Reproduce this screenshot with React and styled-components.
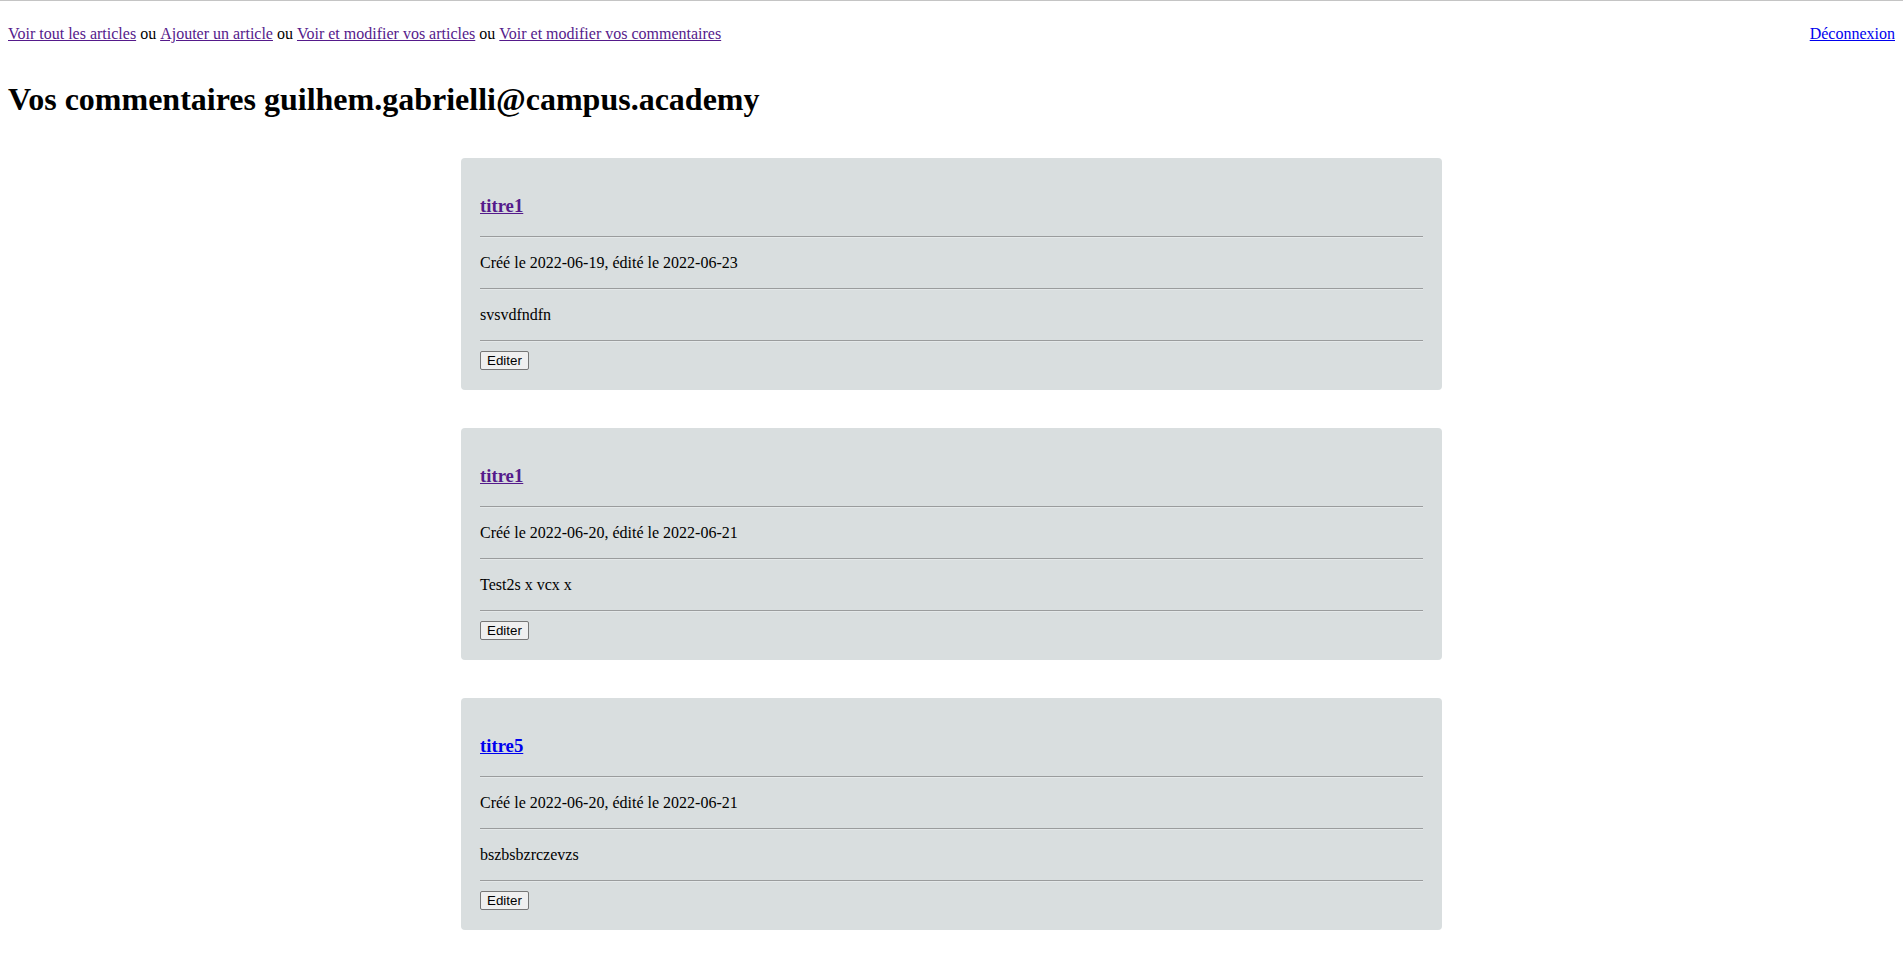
import React from 'react'
import styled, { createGlobalStyle } from 'styled-components'

const GlobalStyle = createGlobalStyle`
    html {
        overflow: hidden;
    }
    body {
        margin: 0;
        border-top: 1px solid #c4c4c4;
        background: #fff;
        font-family: "Liberation Serif", "Times New Roman", serif;
        font-size: 16px;
        color: #000;
    }
`

const TopBar = styled.div`
    display: flex;
    justify-content: space-between;
    align-items: baseline;
    padding: 0 8px;
    margin-top: 24px;
    line-height: 18px;
`

const Links = styled.div`
    display: flex;
    gap: 4px;
    white-space: pre;
`

const NavLink = styled.a`
    color: ${props => (props.visited ? '#551a8b' : '#0000ee')};
    text-decoration: underline;
    cursor: pointer;
`

const Title = styled.h1`
    font-size: 32px;
    font-weight: bold;
    margin: 39px 8px 41px;
    line-height: 35px;
`

const List = styled.div`
    display: flex;
    flex-direction: column;
    align-items: center;
    gap: 37.5px;
`

const Card = styled.div`
    box-sizing: border-box;
    width: 981px;
    background: #d9dedf;
    border-radius: 4px;
    padding: 21px 19px 20px 19px;
`

const CardTitle = styled.h3`
    font-size: 18.72px;
    font-weight: bold;
    margin: 16px 0 20.3px;
    line-height: 21px;
`

const Rule = styled.hr`
    border: none;
    border-top: 1px solid #9a9c9d;
    border-bottom: 1px solid #e4e8e9;
    margin: 0;
`

const Text = styled.p`
    margin: 16px 0;
    line-height: 18px;
`

const Actions = styled.div`
    padding-top: 7px;
    line-height: 21px;
`

const EditButton = styled.button`
    font-family: "Liberation Sans", Arial, sans-serif;
    font-size: 13.33px;
    padding: 1px 6px;
    background: #efefef;
    border: 1px solid #767676;
    border-radius: 2px;
    color: #000;
`

const comments = [
    { id: 1, title: 'titre1', visited: true, created: '2022-06-19', edited: '2022-06-23', body: 'svsvdfndfn' },
    { id: 2, title: 'titre1', visited: true, created: '2022-06-20', edited: '2022-06-21', body: 'Test2s x vcx x' },
    { id: 3, title: 'titre5', visited: false, created: '2022-06-20', edited: '2022-06-21', body: 'bszbsbzrczevzs' },
    { id: 4, title: 'titre5', visited: false, created: '2022-06-21', edited: '2022-06-21', body: 'dfbdfbdfb' },
]

function CommentCard({ comment }) {
    return (
        <Card>
            <CardTitle>
                <NavLink visited={comment.visited}>{comment.title}</NavLink>
            </CardTitle>
            <Rule />
            <Text>Créé le {comment.created}, édité le {comment.edited}</Text>
            <Rule />
            <Text>{comment.body}</Text>
            <Rule />
            <Actions>
                <EditButton>Editer</EditButton>
            </Actions>
        </Card>
    )
}

export default function App() {
    return (
        <React.Fragment>
            <GlobalStyle />
            <TopBar>
                <Links>
                    <NavLink visited>Voir tout les articles</NavLink>
                    <span>ou</span>
                    <NavLink visited>Ajouter un article</NavLink>
                    <span>ou</span>
                    <NavLink visited>Voir et modifier vos articles</NavLink>
                    <span>ou</span>
                    <NavLink visited>Voir et modifier vos commentaires</NavLink>
                </Links>
                <NavLink>Déconnexion</NavLink>
            </TopBar>
            <Title>Vos commentaires guilhem.gabrielli@campus.academy</Title>
            <List>
                {comments.map(c => (
                    <CommentCard key={c.id} comment={c} />
                ))}
            </List>
        </React.Fragment>
    )
}
